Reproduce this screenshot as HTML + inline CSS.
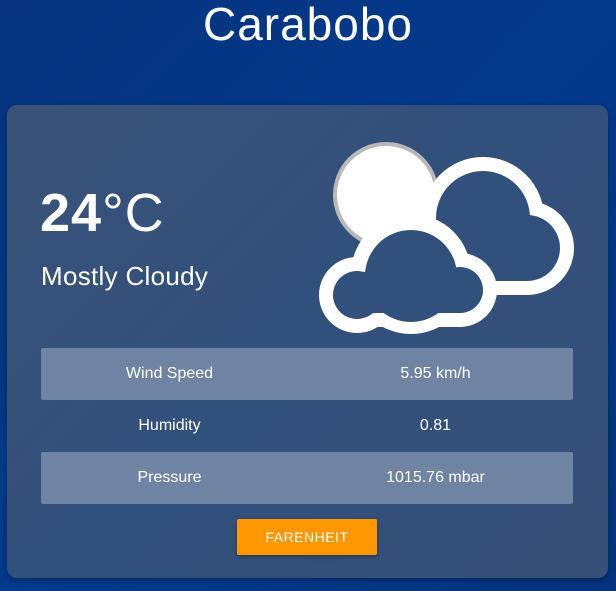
<!DOCTYPE html>
<html><head><style>
html,body{margin:0;padding:0;width:616px;height:591px;overflow:hidden;background:linear-gradient(135deg,#07337f,#033a8c 50%,#05327d);font-family:"Liberation Sans",sans-serif;color:#fff}
h1{position:absolute;left:0;width:616px;top:-3px;margin:0;text-align:center;font-weight:normal;font-size:46px;letter-spacing:1px}
.card{position:absolute;left:7px;top:105px;width:601px;height:473px;border-radius:10px;background:linear-gradient(135deg,#3a5278,#31507c 50%,#374f76);box-shadow:0 2px 6px rgba(0,0,0,.3)}
.temp{position:absolute;left:40px;top:181px;font-size:54px;line-height:64px;letter-spacing:1px}
.temp b{font-weight:bold}
.desc{position:absolute;left:41px;top:261px;font-size:26px;letter-spacing:.3px}
.row{position:absolute;left:41px;width:532px;height:52px;font-size:16px;border-radius:2px}
.row.s{background:#6e84a2}
.row span{position:absolute;top:0;line-height:52px;text-align:center}
.row .a{left:0;width:257px}.row .b{left:257px;width:275px}
.btn{position:absolute;left:237px;top:519px;width:140px;height:36px;background:#ff9800;border-radius:2px;box-shadow:0 2px 4px rgba(0,0,0,.3);text-align:center;line-height:36px;font-size:14px;letter-spacing:.5px}
svg{position:absolute;left:0;top:0}
</style></head><body>
<h1>Carabobo</h1>
<div class="card"></div>
<svg width="616" height="591">
<circle cx="386" cy="195" r="51" fill="#fff" stroke="#b8b8b8" stroke-width="4"/>
<g fill="#fff">
<circle cx="483" cy="218" r="61"/><circle cx="527" cy="248" r="47"/><circle cx="440" cy="252" r="45"/><rect x="430" y="230" width="97" height="65"/>
</g>
<g fill="#31507c">
<circle cx="483" cy="218" r="47"/><circle cx="527" cy="248" r="33"/><circle cx="440" cy="252" r="31"/><rect x="440" y="230" width="87" height="51"/>
</g>
<g fill="#fff">
<circle cx="411" cy="274" r="60"/><circle cx="460" cy="290" r="37"/><circle cx="357" cy="295" r="38"/><rect x="355" y="272" width="105" height="55"/>
</g>
<g fill="#31507c">
<circle cx="411" cy="276" r="46"/><circle cx="460" cy="290" r="23"/><circle cx="357" cy="295" r="24"/><rect x="357" y="272" width="103" height="41"/>
</g>
</svg>
<div class="temp"><b>24</b>°C</div>
<div class="desc">Mostly Cloudy</div>
<div class="row s" style="top:348px"><span class="a">Wind Speed</span><span class="b">5.95 km/h</span></div>
<div class="row" style="top:400px"><span class="a">Humidity</span><span class="b">0.81</span></div>
<div class="row s" style="top:452px"><span class="a">Pressure</span><span class="b">1015.76 mbar</span></div>
<div class="btn">FARENHEIT</div>
</body></html>
